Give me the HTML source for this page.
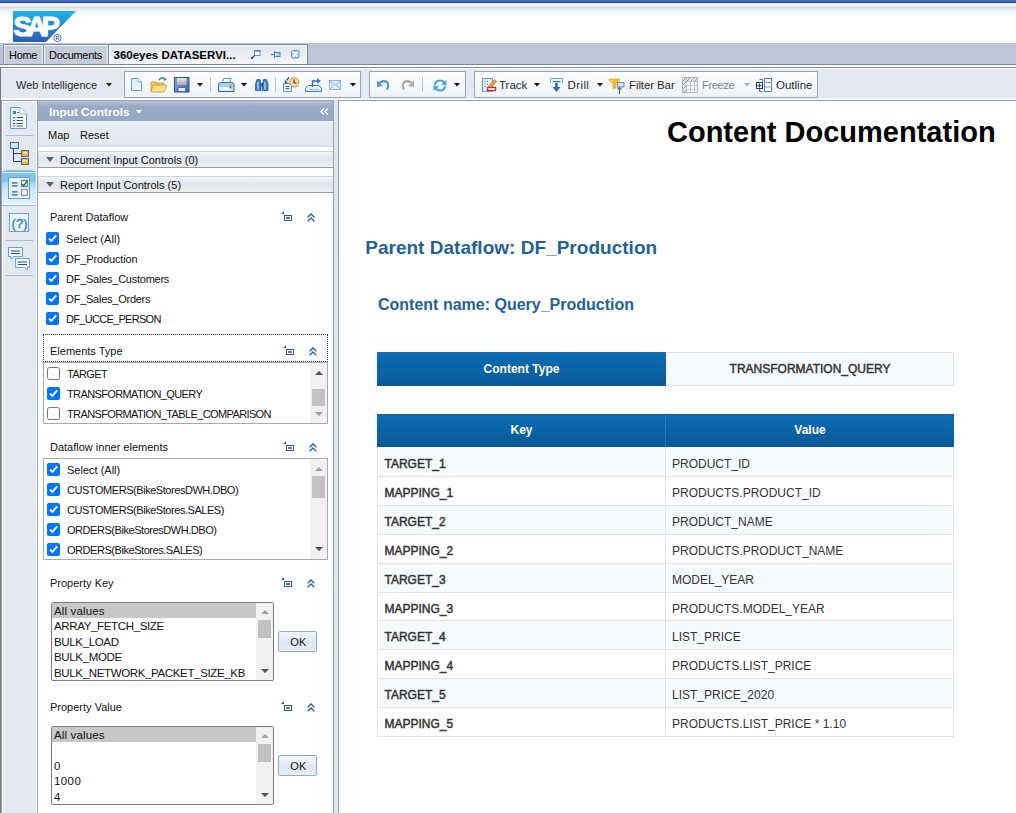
<!DOCTYPE html>
<html><head><meta charset="utf-8">
<style>
*{box-sizing:border-box;margin:0;padding:0}
html,body{width:1016px;height:813px;overflow:hidden;background:#fff;font-family:"Liberation Sans",sans-serif;font-size:11px;color:#111}
.a{position:absolute}
.t{position:absolute;white-space:pre;line-height:1}
svg{position:absolute;overflow:visible}
</style></head><body>
<!-- header band -->
<div class="a" style="left:0;top:0;width:1016px;height:3px;background:linear-gradient(#4a78c4,#2048a0)"></div>
<div class="a" style="left:0;top:3px;width:1016px;height:40px;background:linear-gradient(#c9ced6 0px,#f5f5f5 1px,#fefefe 2px,#e8ebf0 3px,#d6dce7 4px,#dde2ea 5px,#e6e9ef 6px,#ecf0f4 7px,#f6f8fa 10px,#fff 13px)"></div>
<!-- SAP logo -->
<svg style="left:0;top:0" width="100" height="43">
 <defs><linearGradient id="sapg" x1="0" y1="0" x2="0" y2="1"><stop offset="0" stop-color="#1db2ea"/><stop offset="1" stop-color="#2d5db8"/></linearGradient></defs>
 <polygon points="13,11 76,11 46,42 13,42" fill="url(#sapg)"/>
 <text x="13.4" y="35.9" font-family="Liberation Sans" font-weight="bold" font-size="27.5" fill="#fff" stroke="#fff" stroke-width="1.1" letter-spacing="-5">SAP</text>
 <circle cx="57.5" cy="38" r="3.6" fill="none" stroke="#3a66bb" stroke-width="0.9"/>
 <text x="55.6" y="40.2" font-family="Liberation Sans" font-size="5.5" font-weight="bold" fill="#3a66bb">R</text>
</svg>
<!-- tab bar -->
<div class="a" style="left:0;top:43px;width:1016px;height:21px;background:#bcc6d8"></div>
<div class="a" style="left:0;top:64px;width:1016px;height:1px;background:#7088ac"></div>
<div class="a" style="left:0;top:65px;width:1016px;height:2px;background:#fff"></div>
<div class="a" style="left:0;top:67px;width:1016px;height:1px;background:#858585"></div>
<!-- tabs -->
<div class="a" style="left:3px;top:44px;width:41px;height:20px;background:#c5cdd9;border:1px solid #7890ac;border-bottom:none;border-radius:2px 2px 0 0;box-shadow:inset 1px 1px 0 #eef2f8,inset -1px 0 0 #eef2f8"></div>
<div class="t" style="left:9px;top:50px;font-size:11px;letter-spacing:-0.3px;color:#000">Home</div>
<div class="a" style="left:43px;top:44px;width:66px;height:20px;background:#c5cdd9;border:1px solid #7890ac;border-bottom:none;border-radius:2px 2px 0 0;box-shadow:inset 1px 1px 0 #eef2f8,inset -1px 0 0 #eef2f8"></div>
<div class="t" style="left:49px;top:50px;font-size:11px;letter-spacing:-0.3px;color:#000">Documents</div>
<div class="a" style="left:108px;top:44px;width:200px;height:20px;background:linear-gradient(#dfe5ee,#f4f6f9);border:1px solid #6b85ad;border-bottom:none;border-radius:2px 2px 0 0;box-shadow:inset 1px 1px 0 #fff,inset -1px 0 0 #fff"></div>
<div class="t" style="left:113.5px;top:50px;font-size:11.5px;font-weight:bold;color:#000">360eyes DATASERVI...</div>

<!-- toolbar -->
<div class="a" style="left:0;top:68px;width:1016px;height:32px;background:#e3e8f2;border-top:1px solid #fff"></div>
<div class="a" style="left:0;top:98px;width:1016px;height:2px;background:#f4f6fa"></div>
<div class="a" style="left:0;top:67px;width:1px;height:746px;background:#7a7a7a"></div>
<div class="t" style="left:16px;top:80px;font-size:11px;color:#2a2a2a">Web Intelligence</div>
<svg style="left:106px;top:83px" width="6" height="4"><polygon points="0,0 6,0 3,3.5" fill="#222"/></svg>
<!-- groups -->
<div class="a" style="left:124px;top:71px;width:237px;height:27px;border:1px solid #90a6c6;background:linear-gradient(#fff,#eef2f8)"></div>
<div class="a" style="left:369px;top:71px;width:97px;height:27px;border:1px solid #90a6c6;background:linear-gradient(#fff,#eef2f8)"></div>
<div class="a" style="left:474px;top:71px;width:344px;height:27px;border:1px solid #90a6c6;background:linear-gradient(#fff,#eef2f8)"></div>
<!-- group1 icons -->
<svg style="left:131px;top:78px" width="12" height="14"><defs><linearGradient id="ndg" x1="0" y1="0" x2="1" y2="1"><stop offset="0" stop-color="#dcebfa"/><stop offset="1" stop-color="#f8fbff"/></linearGradient></defs><path d="M0.5,0.5 H7 L10.5,4 V12.5 H0.5 Z" fill="url(#ndg)" stroke="#5b9be0"/><path d="M7,0.5 V4 H10.5" fill="#fff" stroke="#7aaee8"/></svg>
<svg style="left:150px;top:76px" width="18" height="17"><path d="M1,6 H6 L7,7 H14 V15 H1 Z" fill="#f3c95a" stroke="#c89a2a" stroke-width="0.8"/><path d="M3,9 H17 L14,16 H1 Z" fill="#fbe28a" stroke="#c89a2a" stroke-width="0.8"/><path d="M9,4 Q12,0 15,3" fill="none" stroke="#3a78c8" stroke-width="1.5"/><polygon points="13.5,1.5 17,3 14,5" fill="#3a78c8"/></svg>
<svg style="left:174px;top:77px" width="16" height="16"><defs><linearGradient id="svg1" x1="0" y1="0" x2="1" y2="1"><stop offset="0" stop-color="#8aaee0"/><stop offset="1" stop-color="#3a64b0"/></linearGradient><linearGradient id="svg2" x1="0" y1="0" x2="0" y2="1"><stop offset="0" stop-color="#e8e8e8"/><stop offset="1" stop-color="#a8a8a8"/></linearGradient></defs><rect x="0.5" y="0.5" width="14.5" height="14.5" fill="url(#svg1)" stroke="#2e4f8e"/><rect x="3" y="1" width="9.5" height="7" fill="url(#svg2)"/><rect x="4" y="10.5" width="7.5" height="4" fill="#e8ecf2" stroke="#2e4f8e" stroke-width="0.8" rx="1"/></svg>
<svg style="left:197px;top:83px" width="6" height="4"><polygon points="0,0 6,0 3,3.5" fill="#111"/></svg>
<div class="a" style="left:210px;top:77px;width:1px;height:15px;background:#b4c4da"></div>
<svg style="left:218px;top:78px" width="17" height="15"><path d="M4.5,5 L5.5,0.5 H13 L12,5" fill="#fff" stroke="#6a8ab0"/><path d="M0.5,7 Q0.5,4.5 3,4.5 H13.5 Q16,4.5 16,7 V13.5 H0.5 Z" fill="#a8d0f2" stroke="#3a68a8"/><rect x="1.5" y="9" width="13" height="3.5" fill="#eef6ff"/><rect x="11.5" y="7" width="2" height="2" fill="#3c3"/><rect x="11.5" y="9" width="2" height="1.5" fill="#e33"/></svg>
<svg style="left:241px;top:83px" width="6" height="4"><polygon points="0,0 6,0 3,3.5" fill="#111"/></svg>
<svg style="left:255px;top:78px" width="14" height="13"><path d="M0.5,12.5 V6 L2,1.5 H5 L6,6 V12.5 Z M7.5,12.5 V6 L8.5,1.5 H11.5 L13,6 V12.5 Z" fill="#3a7ac8" stroke="#2c5aa0" stroke-width="0.8"/><rect x="5.5" y="5" width="3" height="3.5" fill="#2c5aa0"/><path d="M3,4 V11.5 M10,4 V11.5" stroke="#d8ecff" stroke-width="1.1"/></svg>
<div class="a" style="left:275px;top:77px;width:1px;height:15px;background:#b4c4da"></div>
<svg style="left:283px;top:77px" width="17" height="16"><rect x="0.5" y="6.5" width="8" height="8" fill="#e8f2fc" stroke="#5b9be0"/><path d="M2.5,9.5 H6.5 M2.5,11.5 H6.5" stroke="#3a68a8"/><circle cx="11.3" cy="5.3" r="4.6" fill="#f4e0a8" stroke="#b8902a"/><path d="M11,2.6 V6 H13.6" stroke="#333" fill="none" stroke-width="1.1"/><path d="M6,0.5 L3.5,3.5" stroke="#1e4a8a" stroke-width="1.3" fill="none"/><polygon points="1.5,2.5 5,6.5 2,6.5" fill="#1e4a8a"/></svg>
<svg style="left:305px;top:77px" width="17" height="16"><path d="M0.5,14.5 V11.5 L3,8.5 H14 L16.5,11.5 V14.5 Z" fill="#e8f2fc" stroke="#3a78c8"/><path d="M3,12.5 H14" stroke="#9ac0e8"/><path d="M7.5,10 V4 H13" stroke="#3a68a8" stroke-width="1.5" fill="none"/><polygon points="12,1 16,4 12,7" fill="#3a78c8"/></svg>
<svg style="left:329px;top:80px" width="12" height="10"><rect x="0.5" y="0.5" width="11" height="9" fill="#dcecfc" stroke="#8ab4e4"/><path d="M0.5,0.5 L6,5.5 L11.5,0.5 M0.5,9.5 L4.5,4.5 M11.5,9.5 L7.5,4.5" stroke="#8ab4e4" fill="none"/></svg>
<svg style="left:350px;top:83px" width="6" height="4"><polygon points="0,0 6,0 3,3.5" fill="#111"/></svg>
<!-- group2 icons -->
<svg style="left:377px;top:79px" width="13" height="12"><path d="M2.5,4 Q6,0.8 9.5,2.8 Q12.5,5.5 10,10.5" stroke="#4a92dc" stroke-width="2.2" fill="none"/><polygon points="0,1.5 0,8 5.8,7" fill="#4a92dc"/></svg>
<svg style="left:401px;top:79px" width="13" height="12"><path d="M10.5,4 Q7,0.8 3.5,2.8 Q0.5,5.5 3,10.5" stroke="#ababab" stroke-width="2.2" fill="none"/><polygon points="13,1.5 13,8 7.2,7" fill="#ababab"/></svg>
<div class="a" style="left:422px;top:77px;width:1px;height:15px;background:#b4c4da"></div>
<svg style="left:433px;top:79px" width="14" height="13"><path d="M1.8,6 Q2.5,1.5 7,1.5 Q10,1.5 11.5,4" stroke="#4aa2ea" stroke-width="2" fill="none"/><polygon points="13.5,1 13.5,6.5 8,5.5" fill="#4aa2ea"/><path d="M12.2,7 Q11.5,11.5 7,11.5 Q4,11.5 2.5,9" stroke="#4aa2ea" stroke-width="2" fill="none"/><polygon points="0.5,12 0.5,6.5 6,7.5" fill="#4aa2ea"/></svg>
<svg style="left:454px;top:83px" width="6" height="4"><polygon points="0,0 6,0 3,3.5" fill="#111"/></svg>
<!-- group3 -->
<svg style="left:482px;top:78px" width="15" height="15"><rect x="0.5" y="0.5" width="10" height="13" fill="#e8f2fc" stroke="#5b9be0"/><path d="M2.5,3.5 h1 M2.5,6 h1 M2.5,8.5 h1 M5,3.5 h1 M5,6 h1" stroke="#3a68a8"/><path d="M6,9 L12.5,1.5 L14.5,3.5 L8,11 L5.5,11.5 Z" fill="#f0a040" stroke="#906030" stroke-width="0.6"/><rect x="5.5" y="9.5" width="8" height="3" fill="#fff" stroke="#e02020" stroke-width="1.3"/></svg>
<div class="t" style="left:499px;top:80px;font-size:11.5px;color:#2a2a2a">Track</div>
<svg style="left:534px;top:83px" width="6" height="4"><polygon points="0,0 6,0 3,3.5" fill="#111"/></svg>
<svg style="left:550px;top:78px" width="13" height="15"><path d="M0.5,5 V0.5 H12.5 V5" stroke="#6aa4e4" fill="none"/><rect x="2.5" y="3" width="8" height="1.3" fill="#3a7ad0"/><path d="M6.5,5 V10" stroke="#2c6ac0" stroke-width="2.6"/><polygon points="2.5,9 10.5,9 6.5,14" fill="#2c6ac0"/></svg>
<div class="t" style="left:567.5px;top:80px;font-size:11.5px;letter-spacing:0.4px;color:#2a2a2a">Drill</div>
<svg style="left:597px;top:83px" width="6" height="4"><polygon points="0,0 6,0 3,3.5" fill="#111"/></svg>
<svg style="left:608px;top:78px" width="17" height="16"><path d="M1,1 H11.5 L11.5,2.5 L8,5 V10 L5,10.5 V5 L1,2.5 Z" fill="#f8c020" stroke="#e8a010" stroke-width="0.6"/><path d="M3,2 L5,3.5" stroke="#fff6c0" stroke-width="1"/><rect x="9.5" y="4.5" width="6.5" height="4.5" fill="#d8e8f8" stroke="#6a8ab8"/><path d="M11.5,16 V9.5" stroke="#555c68" stroke-width="1.1"/><path d="M9.5,11.5 L11.5,9.5 L13.5,11.5" stroke="#4a6a98" stroke-width="1.1" fill="none"/></svg>
<div class="t" style="left:629px;top:80px;font-size:11.5px;letter-spacing:-0.1px;color:#2a2a2a">Filter Bar</div>
<svg style="left:682px;top:77px" width="16" height="16"><rect x="0.5" y="0.5" width="15" height="15" fill="#fff" stroke="#a8b8d0"/><rect x="1" y="1" width="14" height="3" fill="#dde6f2"/><rect x="1" y="1" width="3" height="14" fill="#dde6f2"/><path d="M1,4 L4,1 M5,4 L8,1 M9,4 L12,1 M12.5,4 L15,1.5 M1,8 L4,5 M1,12 L4,9 M1,15.5 L4,13" stroke="#b88a60" stroke-width="0.9"/><path d="M4.5,1 V15 M8.5,4 V15 M12.5,4 V15 M1,4.5 H15 M4,8.5 H15 M4,12.5 H15" stroke="#b8c8e0"/></svg>
<div class="t" style="left:702px;top:80px;font-size:11.5px;letter-spacing:-0.6px;color:#7e8694">Freeze</div>
<svg style="left:744px;top:83px" width="6" height="4"><polygon points="0,0 6,0 3,3.5" fill="#a0b0c8"/></svg>
<svg style="left:756px;top:78px" width="17" height="15"><path d="M6.5,3.5 V1.5 H3.5 M3.5,13.5 H6.5 M3.5,11 V13.5" stroke="#4a6ea8" fill="none"/><rect x="0.5" y="4.5" width="6" height="6" fill="#fff" stroke="#1e3e80"/><path d="M3.5,5.5 V9.5 M1.5,7.5 H5.5" stroke="#1e3e80" stroke-width="1.2"/><rect x="8.5" y="0.5" width="7" height="13" fill="#fff" stroke="#5a80b8"/><path d="M8.5,4.5 H15.5 M8.5,9 H15.5" stroke="#7a9ac8"/></svg>
<div class="t" style="left:776px;top:80px;font-size:11.5px;color:#2a2a2a">Outline</div>

<svg style="left:250px;top:49px" width="11" height="11"><rect x="4.5" y="1.5" width="5.5" height="5" fill="#fff" stroke="#5b8fd0"/><rect x="4" y="1" width="6.5" height="1.8" fill="#5b8fd0"/><path d="M2,9 L4.5,6.5" stroke="#1e4a8a" stroke-width="1.1"/><polygon points="1,10 1,7.5 3.5,10" fill="#1e4a8a"/></svg>
<svg style="left:271px;top:50px" width="10" height="9"><path d="M0,4.5 H3" stroke="#4a82c8"/><path d="M3.5,1 V8" stroke="#4a82c8"/><rect x="3.5" y="2.5" width="5.5" height="4" fill="#bcd6f2" stroke="#4a82c8"/></svg>
<svg style="left:291px;top:50px" width="9" height="9"><rect x="0.5" y="0.5" width="7.5" height="7.5" fill="#a8c8f0" stroke="#6a9ad8" rx="1"/><path d="M2,2 L6.5,6.5 M6.5,2 L2,6.5" stroke="#fff" stroke-width="1.6"/></svg>

<!-- sidebar -->
<div class="a" style="left:1px;top:99px;width:1015px;height:1px;background:#fff"></div>
<div class="a" style="left:1px;top:100px;width:337px;height:1px;background:#8fa3c0"></div>
<div class="a" style="left:1px;top:101px;width:36px;height:712px;background:#e4e8f0;border-left:1px solid #8fa3c0;box-shadow:inset 1px 1px 0 #fff,inset -1px 0 0 #fff"></div>
<div class="a" style="left:37px;top:100px;width:1px;height:713px;background:#8fa3c0"></div>
<svg style="left:10px;top:107px" width="17" height="23"><path d="M0.5,0.5 H10 L16.5,7 V21.5 H0.5 Z" fill="#eef6fe" stroke="#5b9be0"/><path d="M10,0.5 V7 H16.5" fill="#fff" stroke="#8cbcf0"/><rect x="3" y="4" width="3" height="3" fill="#3a7ad0"/><path d="M7,5.5 H9 M3,10.5 H5 M6.5,10.5 H13 M3,13.5 H5 M6.5,13.5 H13 M3,16.5 H5 M6.5,16.5 H13 M3,19 H5 M6.5,19 H13" stroke="#44606e" stroke-width="1.1"/></svg>
<div class="a" style="left:6px;top:135px;width:27px;height:1px;background:#a4bcd8"></div>
<svg style="left:10px;top:142px" width="19" height="23"><rect x="0.5" y="0.5" width="8" height="6" fill="#cfe6fa" stroke="#3a6aa8"/><path d="M3.5,7 V19.5 H11 M3.5,11.5 H11" stroke="#1e3e70" fill="none"/><rect x="11.5" y="8.5" width="7" height="6" fill="#f8b830" stroke="#3a6aa8"/><rect x="11.5" y="16.5" width="7" height="6" fill="#f8b830" stroke="#3a6aa8"/><rect x="13" y="10" width="4" height="1.5" fill="#fde8a0"/><rect x="13" y="18" width="4" height="1.5" fill="#fde8a0"/></svg>
<div class="a" style="left:6px;top:170px;width:27px;height:1px;background:#a4bcd8"></div>
<div class="a" style="left:2px;top:171px;width:34px;height:35px;background:linear-gradient(#78b6e0 0,#78b6e0 1px,#d8eef8 1px,#d8eef8 2px,#7cc4ea 2px,#80c6ea 10px,#b0dcf4 13px,#cfe8f8 20px,#dcf0fa 31px,#f4fafd 33px,#f4fafd 34px,#8ec0e0 34px)"></div>
<svg style="left:8px;top:177px" width="22" height="22"><rect x="0.5" y="0.5" width="21" height="21" fill="#f6fbff" stroke="#6a9ed8"/><rect x="1" y="1" width="11" height="20" fill="#e4f2fc"/><path d="M4,5.8 H9.5 M4,8.8 H9.5 M4,14.8 H9.5 M4,17.8 H9.5" stroke="#3a5a8a" stroke-width="1.2"/><rect x="13.5" y="3.5" width="6" height="6" fill="#fff" stroke="#6a7a98" stroke-width="1.3"/><path d="M14,7 L15.6,9 L19.5,3.5" stroke="#1a8a60" stroke-width="1.6" fill="none"/><rect x="13.5" y="12.5" width="6" height="6" fill="#f0f4f8" stroke="#8a98b0" stroke-width="1.3"/></svg>
<svg style="left:9px;top:213px" width="20" height="19"><rect x="0.5" y="0.5" width="19" height="18" fill="#eef6fe" stroke="#6aa0e0"/><text x="2.6" y="14.6" font-family="Liberation Sans" font-size="13" fill="#2a7ae0" stroke="#2a7ae0" stroke-width="0.35">(?)</text></svg>
<div class="a" style="left:6px;top:240px;width:27px;height:1px;background:#a4bcd8"></div>
<svg style="left:8px;top:247px" width="23" height="24"><path d="M0.5,0.5 H14.5 V9.5 H6 L3,12 V9.5 H0.5 Z" fill="#eef6fe" stroke="#6aa0e0"/><path d="M3,4 H12 M3,6.5 H12" stroke="#2c4e80"/><path d="M7.5,11.5 H21.5 V20.5 H19.5 V23 L16.5,20.5 H7.5 Z" fill="#eef6fe" stroke="#6aa0e0"/><path d="M10,15 H19 M10,17.5 H19" stroke="#2c4e80"/></svg>
<div class="a" style="left:6px;top:275px;width:27px;height:1px;background:#a4bcd8"></div>
<!-- panel -->
<div class="a" style="left:38px;top:101px;width:295px;height:20px;background:linear-gradient(#b8c6dc 0,#9aabc8 5px,#96a8c6)"></div>
<div class="t" style="left:49px;top:106.6px;font-weight:bold;font-size:11.8px;color:#fff">Input Controls</div>
<svg style="left:136px;top:110px" width="6" height="4"><polygon points="0,0 6,0 3,3.5" fill="#fff"/></svg>
<svg style="left:320px;top:108px" width="9" height="7"><path d="M4,0.5 L1,3.5 L4,6.5 M8,0.5 L5,3.5 L8,6.5" stroke="#fff" stroke-width="1.3" fill="none"/></svg>
<div class="a" style="left:38px;top:121px;width:295px;height:26px;background:linear-gradient(#f0f3f7,#e8ecf3 3px,#e3e8f0);border-bottom:1px solid #c8d8ea"></div>
<div class="t" style="left:48px;top:130px;font-size:11px">Map</div>
<div class="t" style="left:80px;top:130px;font-size:11px">Reset</div>
<div class="a" style="left:38px;top:147px;width:295px;height:666px;background:#fff"></div>
<div class="a" style="left:333px;top:100px;width:1px;height:713px;background:#8fa3c0"></div>
<div class="a" style="left:334px;top:100px;width:4px;height:713px;background:#e2e6ec"></div>
<div class="a" style="left:338px;top:100px;width:1px;height:713px;background:#8fa3c0"></div>
<div class="a" style="left:338px;top:100px;width:678px;height:1px;background:#8fa3c0"></div>
<!-- section headers -->
<div class="a" style="left:38px;top:151px;width:295px;height:17px;background:linear-gradient(#f4f7fa 0,#e6edf5 3px,#e2e6eb 8px,#e8eaed 12px,#eff0f2 15px);border-top:1px solid #d4d4d4;border-bottom:1px solid #9a9a9a;border-left:1px solid #d8dadc"></div>
<svg style="left:45.6px;top:157px" width="8" height="5"><polygon points="0,0 8,0 4,5" fill="#606060"/></svg>
<div class="t" style="left:60px;top:155px;font-size:11px">Document Input Controls (0)</div>
<div class="a" style="left:38px;top:176px;width:295px;height:17px;background:linear-gradient(#f4f7fa 0,#e6edf5 3px,#e2e6eb 8px,#e8eaed 12px,#eff0f2 15px);border-top:1px solid #d4d4d4;border-bottom:1px solid #9a9a9a;border-left:1px solid #d8dadc"></div>
<svg style="left:45.6px;top:182px" width="8" height="5"><polygon points="0,0 8,0 4,5" fill="#606060"/></svg>
<div class="t" style="left:60px;top:180px;font-size:11px">Report Input Controls (5)</div>

<!-- input controls -->
<div class="t" style="left:50px;top:212px;">Parent Dataflow</div>
<svg style="left:281px;top:211px" width="13" height="11"><polygon points="0,3 3,0 3,3" fill="#2c5a92"/><rect x="3.5" y="4.5" width="7" height="5" fill="#fff" stroke="#2c5a92"/><rect x="5" y="6.2" width="4" height="1.6" fill="#2c5a92"/></svg><svg style="left:306.6px;top:212.8px" width="8" height="9"><path d="M0.7,4.3 L4,1 L7.3,4.3 M0.7,8.3 L4,5 L7.3,8.3" stroke="#2c5a92" stroke-width="1.3" fill="none"/></svg>
<svg style="left:46px;top:232px" width="13" height="13"><rect x="0" y="0" width="13" height="13" rx="2" fill="#0075ff"/><path d="M3,6.6 L5.4,8.8 L10.2,3.4" stroke="#fff" stroke-width="1.9" fill="none"/></svg>
<div class="t" style="left:66px;top:234px;letter-spacing:0.1px">Select (All)</div>
<svg style="left:46px;top:252px" width="13" height="13"><rect x="0" y="0" width="13" height="13" rx="2" fill="#0075ff"/><path d="M3,6.6 L5.4,8.8 L10.2,3.4" stroke="#fff" stroke-width="1.9" fill="none"/></svg>
<div class="t" style="left:66px;top:254px;letter-spacing:-0.15px">DF_Production</div>
<svg style="left:46px;top:272px" width="13" height="13"><rect x="0" y="0" width="13" height="13" rx="2" fill="#0075ff"/><path d="M3,6.6 L5.4,8.8 L10.2,3.4" stroke="#fff" stroke-width="1.9" fill="none"/></svg>
<div class="t" style="left:66px;top:274px;letter-spacing:-0.25px">DF_Sales_Customers</div>
<svg style="left:46px;top:292px" width="13" height="13"><rect x="0" y="0" width="13" height="13" rx="2" fill="#0075ff"/><path d="M3,6.6 L5.4,8.8 L10.2,3.4" stroke="#fff" stroke-width="1.9" fill="none"/></svg>
<div class="t" style="left:66px;top:294px;letter-spacing:-0.25px">DF_Sales_Orders</div>
<svg style="left:46px;top:312px" width="13" height="13"><rect x="0" y="0" width="13" height="13" rx="2" fill="#0075ff"/><path d="M3,6.6 L5.4,8.8 L10.2,3.4" stroke="#fff" stroke-width="1.9" fill="none"/></svg>
<div class="t" style="left:66px;top:314px;letter-spacing:-0.7px">DF_UCCE_PERSON</div>
<div class="a" style="left:43px;top:334px;width:285px;height:28px;border:1px dotted #333;border-bottom:none"></div>
<div class="a" style="left:43px;top:361px;width:285px;height:1px;border-top:1px dotted #333"></div>
<div class="t" style="left:50px;top:346px;">Elements Type</div>
<svg style="left:283px;top:345px" width="13" height="11"><polygon points="0,3 3,0 3,3" fill="#2c5a92"/><rect x="3.5" y="4.5" width="7" height="5" fill="#fff" stroke="#2c5a92"/><rect x="5" y="6.2" width="4" height="1.6" fill="#2c5a92"/></svg><svg style="left:308.8px;top:346.8px" width="8" height="9"><path d="M0.7,4.3 L4,1 L7.3,4.3 M0.7,8.3 L4,5 L7.3,8.3" stroke="#2c5a92" stroke-width="1.3" fill="none"/></svg>
<div class="a" style="left:43px;top:362px;width:285px;height:62px;border:1px solid #a9a9a9;background:#fff"></div>
<div class="a" style="left:310px;top:363px;width:17px;height:60px;background:#f1f1f1"></div>
<svg style="left:315px;top:371px" width="8" height="4"><polygon points="0,4 8,4 4,0" fill="#505050"/></svg>
<div class="a" style="left:312px;top:389px;width:13px;height:17px;background:#c1c1c1"></div>
<svg style="left:315px;top:412px" width="8" height="4"><polygon points="0,0 8,0 4,4" fill="#a3a3a3"/></svg>
<svg style="left:47px;top:367px" width="13" height="13"><rect x="0.5" y="0.5" width="12" height="12" rx="2" fill="#fff" stroke="#767676"/></svg>
<div class="t" style="left:67px;top:369px;letter-spacing:-0.62px">TARGET</div>
<svg style="left:47px;top:387px" width="13" height="13"><rect x="0" y="0" width="13" height="13" rx="2" fill="#0075ff"/><path d="M3,6.6 L5.4,8.8 L10.2,3.4" stroke="#fff" stroke-width="1.9" fill="none"/></svg>
<div class="t" style="left:67px;top:389px;letter-spacing:-0.62px">TRANSFORMATION_QUERY</div>
<svg style="left:47px;top:407px" width="13" height="13"><rect x="0.5" y="0.5" width="12" height="12" rx="2" fill="#fff" stroke="#767676"/></svg>
<div class="t" style="left:67px;top:409px;letter-spacing:-0.62px">TRANSFORMATION_TABLE_COMPARISON</div>
<div class="t" style="left:50px;top:442px;">Dataflow inner elements</div>
<svg style="left:283px;top:441px" width="13" height="11"><polygon points="0,3 3,0 3,3" fill="#2c5a92"/><rect x="3.5" y="4.5" width="7" height="5" fill="#fff" stroke="#2c5a92"/><rect x="5" y="6.2" width="4" height="1.6" fill="#2c5a92"/></svg><svg style="left:308.8px;top:442.8px" width="8" height="9"><path d="M0.7,4.3 L4,1 L7.3,4.3 M0.7,8.3 L4,5 L7.3,8.3" stroke="#2c5a92" stroke-width="1.3" fill="none"/></svg>
<div class="a" style="left:43px;top:458px;width:285px;height:102px;border:1px solid #a9a9a9;background:#fff"></div>
<div class="a" style="left:310px;top:459px;width:17px;height:100px;background:#f1f1f1"></div>
<svg style="left:315px;top:467px" width="8" height="4"><polygon points="0,4 8,4 4,0" fill="#a3a3a3"/></svg>
<div class="a" style="left:312px;top:476px;width:13px;height:22px;background:#c1c1c1"></div>
<svg style="left:315px;top:547px" width="8" height="4"><polygon points="0,0 8,0 4,4" fill="#505050"/></svg>
<svg style="left:47px;top:463px" width="13" height="13"><rect x="0" y="0" width="13" height="13" rx="2" fill="#0075ff"/><path d="M3,6.6 L5.4,8.8 L10.2,3.4" stroke="#fff" stroke-width="1.9" fill="none"/></svg>
<div class="t" style="left:67px;top:465px;letter-spacing:0px">Select (All)</div>
<svg style="left:47px;top:483px" width="13" height="13"><rect x="0" y="0" width="13" height="13" rx="2" fill="#0075ff"/><path d="M3,6.6 L5.4,8.8 L10.2,3.4" stroke="#fff" stroke-width="1.9" fill="none"/></svg>
<div class="t" style="left:67px;top:485px;letter-spacing:-0.45px">CUSTOMERS(BikeStoresDWH.DBO)</div>
<svg style="left:47px;top:503px" width="13" height="13"><rect x="0" y="0" width="13" height="13" rx="2" fill="#0075ff"/><path d="M3,6.6 L5.4,8.8 L10.2,3.4" stroke="#fff" stroke-width="1.9" fill="none"/></svg>
<div class="t" style="left:67px;top:505px;letter-spacing:-0.45px">CUSTOMERS(BikeStores.SALES)</div>
<svg style="left:47px;top:523px" width="13" height="13"><rect x="0" y="0" width="13" height="13" rx="2" fill="#0075ff"/><path d="M3,6.6 L5.4,8.8 L10.2,3.4" stroke="#fff" stroke-width="1.9" fill="none"/></svg>
<div class="t" style="left:67px;top:525px;letter-spacing:-0.45px">ORDERS(BikeStoresDWH.DBO)</div>
<svg style="left:47px;top:543px" width="13" height="13"><rect x="0" y="0" width="13" height="13" rx="2" fill="#0075ff"/><path d="M3,6.6 L5.4,8.8 L10.2,3.4" stroke="#fff" stroke-width="1.9" fill="none"/></svg>
<div class="t" style="left:67px;top:545px;letter-spacing:-0.45px">ORDERS(BikeStores.SALES)</div>
<div class="t" style="left:50px;top:578px;">Property Key</div>
<svg style="left:281px;top:577px" width="13" height="11"><polygon points="0,3 3,0 3,3" fill="#2c5a92"/><rect x="3.5" y="4.5" width="7" height="5" fill="#fff" stroke="#2c5a92"/><rect x="5" y="6.2" width="4" height="1.6" fill="#2c5a92"/></svg><svg style="left:306.6px;top:578.8px" width="8" height="9"><path d="M0.7,4.3 L4,1 L7.3,4.3 M0.7,8.3 L4,5 L7.3,8.3" stroke="#2c5a92" stroke-width="1.3" fill="none"/></svg>
<div class="a" style="left:51px;top:602px;width:223px;height:79px;border:1px solid #7a7a7a;border-radius:2px;background:#fff;overflow:hidden"><div class="a" style="left:0;top:0;width:204px;height:15px;background:#c8c8c8"></div><div class="a" style="left:204px;top:0;width:17px;height:77px;background:#f1f1f1"></div><svg style="left:209px;top:7px" width="8" height="4"><polygon points="0,4 8,4 4,0" fill="#a3a3a3"/></svg><div class="a" style="left:206px;top:17px;width:13px;height:18px;background:#c1c1c1"></div><svg style="left:209px;top:66px" width="8" height="4"><polygon points="0,0 8,0 4,4" fill="#505050"/></svg><div class="t" style="left:2px;top:2.5px;font-size:11.5px;letter-spacing:-0.35px"><span style="letter-spacing:0.15px">All values</span></div><div class="t" style="left:2px;top:18.0px;font-size:11.5px;letter-spacing:-0.35px">ARRAY_FETCH_SIZE</div><div class="t" style="left:2px;top:33.5px;font-size:11.5px;letter-spacing:-0.35px">BULK_LOAD</div><div class="t" style="left:2px;top:49.0px;font-size:11.5px;letter-spacing:-0.35px">BULK_MODE</div><div class="t" style="left:2px;top:64.5px;font-size:11.5px;letter-spacing:-0.35px">BULK_NETWORK_PACKET_SIZE_KB</div></div>
<div class="a" style="left:278px;top:631px;width:39px;height:21px;border:1px solid #8eaad0;border-radius:2px;background:linear-gradient(#f4f7fb,#dfe6f0 60%,#e8eef6)"></div>
<div class="t" style="left:290.3px;top:637.3px;font-size:11px;letter-spacing:0.1px">OK</div>
<div class="t" style="left:50px;top:702px;">Property Value</div>
<svg style="left:281px;top:701px" width="13" height="11"><polygon points="0,3 3,0 3,3" fill="#2c5a92"/><rect x="3.5" y="4.5" width="7" height="5" fill="#fff" stroke="#2c5a92"/><rect x="5" y="6.2" width="4" height="1.6" fill="#2c5a92"/></svg><svg style="left:306.6px;top:702.8px" width="8" height="9"><path d="M0.7,4.3 L4,1 L7.3,4.3 M0.7,8.3 L4,5 L7.3,8.3" stroke="#2c5a92" stroke-width="1.3" fill="none"/></svg>
<div class="a" style="left:51px;top:726px;width:223px;height:79px;border:1px solid #7a7a7a;border-radius:2px;background:#fff;overflow:hidden"><div class="a" style="left:0;top:0;width:204px;height:15px;background:#c8c8c8"></div><div class="a" style="left:204px;top:0;width:17px;height:77px;background:#f1f1f1"></div><svg style="left:209px;top:7px" width="8" height="4"><polygon points="0,4 8,4 4,0" fill="#a3a3a3"/></svg><div class="a" style="left:206px;top:17px;width:13px;height:18px;background:#c1c1c1"></div><svg style="left:209px;top:66px" width="8" height="4"><polygon points="0,0 8,0 4,4" fill="#505050"/></svg><div class="t" style="left:2px;top:2.5px;font-size:11.5px;letter-spacing:-0.35px"><span style="letter-spacing:0.15px">All values</span></div><div class="t" style="left:2px;top:18.0px;font-size:11.5px;letter-spacing:-0.35px"></div><div class="t" style="left:2px;top:33.5px;font-size:11.5px;letter-spacing:-0.35px">0</div><div class="t" style="left:2px;top:49.0px;font-size:11.5px;letter-spacing:0.4px">1000</div><div class="t" style="left:2px;top:64.5px;font-size:11.5px;letter-spacing:-0.35px">4</div></div>
<div class="a" style="left:278px;top:755px;width:39px;height:21px;border:1px solid #8eaad0;border-radius:2px;background:linear-gradient(#f4f7fb,#dfe6f0 60%,#e8eef6)"></div>
<div class="t" style="left:290.3px;top:761.3px;font-size:11px;letter-spacing:0.1px">OK</div>

<!-- report -->
<div class="t" style="left:667px;top:117.8px;font-size:29px;font-weight:bold;color:#000">Content Documentation</div>
<div class="t" style="left:365.2px;top:237.6px;letter-spacing:0.02px;font-size:19px;font-weight:bold;color:#23619a">Parent Dataflow: DF_Production</div>
<div class="t" style="left:378px;top:297.4px;font-size:16px;font-weight:bold;color:#23619a">Content name: Query_Production</div>
<div class="a" style="left:377px;top:352px;width:289px;height:34px;background:linear-gradient(#0b6db4,#0a5a98)"></div>
<div class="t" style="left:377px;top:363px;width:289px;text-align:center;font-size:12px;font-weight:bold;color:#fff">Content Type</div>
<div class="a" style="left:666px;top:352px;width:288px;height:34px;background:#f6f9fb;border:1px solid #e2e2e2;border-left:none"></div>
<div class="t" style="left:666px;top:363px;width:288px;text-align:center;font-size:12px;-webkit-text-stroke:0.45px #333;color:#333">TRANSFORMATION_QUERY</div>
<div class="a" style="left:377px;top:414px;width:577px;height:33px;background:linear-gradient(#0b6db4,#0a5896);border-top:1px solid #1c5f98"></div>
<div class="a" style="left:665px;top:415px;width:1px;height:32px;background:#4a88c0;opacity:.6"></div>
<div class="t" style="left:377px;top:424.4px;width:289px;text-align:center;font-size:12px;font-weight:bold;color:#fff">Key</div>
<div class="t" style="left:666px;top:424.4px;width:288px;text-align:center;font-size:12px;font-weight:bold;color:#fff">Value</div>
<div class="a" style="left:377px;top:447px;width:577px;height:290px;background:#fff;border:1px solid #e4e4e4;border-top:none"></div>
<div class="a" style="left:378px;top:447px;width:575px;height:29px;background:#f6f9fb"></div>
<div class="a" style="left:378px;top:476px;width:575px;height:1px;background:#e4e4e4"></div>
<div class="t" style="left:384.5px;top:458.4px;font-size:12px;-webkit-text-stroke:0.45px #333;color:#333">TARGET_1</div>
<div class="t" style="left:672px;top:458.4px;font-size:12px;color:#333">PRODUCT_ID</div>
<div class="a" style="left:378px;top:505px;width:575px;height:1px;background:#e4e4e4"></div>
<div class="t" style="left:384.5px;top:487.4px;font-size:12px;-webkit-text-stroke:0.45px #333;color:#333">MAPPING_1</div>
<div class="t" style="left:672px;top:487.4px;font-size:12px;color:#333">PRODUCTS.PRODUCT_ID</div>
<div class="a" style="left:378px;top:506px;width:575px;height:28px;background:#f6f9fb"></div>
<div class="a" style="left:378px;top:534px;width:575px;height:1px;background:#e4e4e4"></div>
<div class="t" style="left:384.5px;top:516.4px;font-size:12px;-webkit-text-stroke:0.45px #333;color:#333">TARGET_2</div>
<div class="t" style="left:672px;top:516.4px;font-size:12px;color:#333">PRODUCT_NAME</div>
<div class="a" style="left:378px;top:563px;width:575px;height:1px;background:#e4e4e4"></div>
<div class="t" style="left:384.5px;top:545.4px;font-size:12px;-webkit-text-stroke:0.45px #333;color:#333">MAPPING_2</div>
<div class="t" style="left:672px;top:545.4px;font-size:12px;color:#333">PRODUCTS.PRODUCT_NAME</div>
<div class="a" style="left:378px;top:564px;width:575px;height:28px;background:#f6f9fb"></div>
<div class="a" style="left:378px;top:592px;width:575px;height:1px;background:#e4e4e4"></div>
<div class="t" style="left:384.5px;top:574.4px;font-size:12px;-webkit-text-stroke:0.45px #333;color:#333">TARGET_3</div>
<div class="t" style="left:672px;top:574.4px;font-size:12px;color:#333">MODEL_YEAR</div>
<div class="a" style="left:378px;top:620px;width:575px;height:1px;background:#e4e4e4"></div>
<div class="t" style="left:384.5px;top:603.4px;font-size:12px;-webkit-text-stroke:0.45px #333;color:#333">MAPPING_3</div>
<div class="t" style="left:672px;top:603.4px;font-size:12px;color:#333">PRODUCTS.MODEL_YEAR</div>
<div class="a" style="left:378px;top:621px;width:575px;height:28px;background:#f6f9fb"></div>
<div class="a" style="left:378px;top:649px;width:575px;height:1px;background:#e4e4e4"></div>
<div class="t" style="left:384.5px;top:631.4px;font-size:12px;-webkit-text-stroke:0.45px #333;color:#333">TARGET_4</div>
<div class="t" style="left:672px;top:631.4px;font-size:12px;color:#333">LIST_PRICE</div>
<div class="a" style="left:378px;top:678px;width:575px;height:1px;background:#e4e4e4"></div>
<div class="t" style="left:384.5px;top:660.4px;font-size:12px;-webkit-text-stroke:0.45px #333;color:#333">MAPPING_4</div>
<div class="t" style="left:672px;top:660.4px;font-size:12px;color:#333">PRODUCTS.LIST_PRICE</div>
<div class="a" style="left:378px;top:679px;width:575px;height:28px;background:#f6f9fb"></div>
<div class="a" style="left:378px;top:707px;width:575px;height:1px;background:#e4e4e4"></div>
<div class="t" style="left:384.5px;top:689.4px;font-size:12px;-webkit-text-stroke:0.45px #333;color:#333">TARGET_5</div>
<div class="t" style="left:672px;top:689.4px;font-size:12px;color:#333">LIST_PRICE_2020</div>
<div class="a" style="left:378px;top:736px;width:575px;height:1px;background:#e4e4e4"></div>
<div class="t" style="left:384.5px;top:718.4px;font-size:12px;-webkit-text-stroke:0.45px #333;color:#333">MAPPING_5</div>
<div class="t" style="left:672px;top:718.4px;font-size:12px;color:#333">PRODUCTS.LIST_PRICE * 1.10</div>
<div class="a" style="left:665px;top:447px;width:1px;height:289px;background:#e4e4e4"></div>
</body></html>
